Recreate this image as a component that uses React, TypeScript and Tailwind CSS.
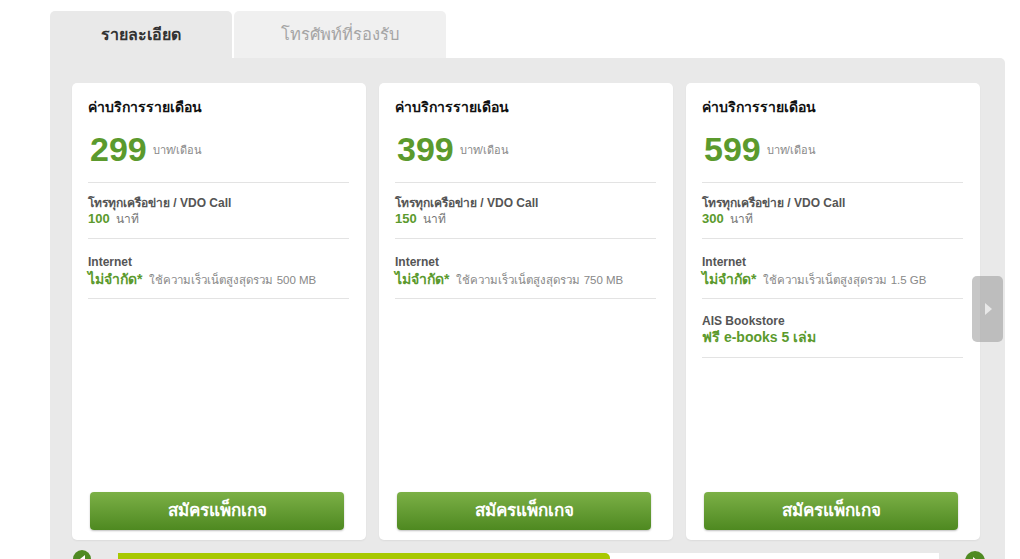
import React from "react";

type Plan = {
  price: string;
  minutes: string;
  data: string;
  extra?: boolean;
};

const plans: Plan[] = [
  { price: "299", minutes: "100", data: "500 MB" },
  { price: "399", minutes: "150", data: "750 MB" },
  { price: "599", minutes: "300", data: "1.5 GB", extra: true },
];

function Card({ p }: { p: Plan }) {
  return (
    <div className="w-[294px] h-[457px] bg-white rounded-[5px] shadow-[0_1px_2px_rgba(0,0,0,0.06)] flex flex-col">
      <div className="px-4 pr-[17px] pt-[14px]">
        <div className="text-[14px] leading-[20px] font-bold text-[#111]">ค่าบริการรายเดือน</div>
        <div className="flex items-center h-[40px] mt-[12px] mb-[13px] pl-[2px]">
          <span className="text-[34px] leading-[40px] font-bold text-[#5b9a2d]">{p.price}</span>
          <span className="text-[11px] text-[#888] ml-[6px] mt-[3px]">บาท/เดือน</span>
        </div>
        <div className="border-t border-[#e3e3e3] pt-3 pb-[11px]">
          <div className="text-[12px] leading-[16px] font-bold text-[#555]">โทรทุกเครือข่าย / VDO Call</div>
          <div className="text-[12px] leading-[16px] text-[#777]">
            <span className="text-[13px] font-bold text-[#5b9a2d]">{p.minutes}</span>
            <span className="ml-[6px]">นาที</span>
          </div>
        </div>
        <div className="border-t border-[#e3e3e3] pt-[15px] pb-[9px]">
          <div className="text-[12px] leading-[16px] font-bold text-[#555]">Internet</div>
          <div className="text-[11.5px] leading-[18px] text-[#888]">
            <span className="text-[14px] font-bold text-[#5b9a2d]">ไม่จำกัด*</span>
            <span className="ml-[7px]">ใช้ความเร็วเน็ตสูงสุดรวม {p.data}</span>
          </div>
        </div>
        {p.extra && (
          <div className="border-t border-[#e3e3e3] pt-[14px] pb-[12px]">
            <div className="text-[12px] leading-[16px] font-bold text-[#555]">AIS Bookstore</div>
            <div className="text-[14px] leading-[16px] font-bold text-[#5b9a2d]">ฟรี e-books 5 เล่ม</div>
          </div>
        )}
        <div className="border-t border-[#e3e3e3]" />
      </div>
      <div className="mt-auto mb-[10px] ml-[18px] w-[254px] h-[38px] rounded-[4px] bg-gradient-to-b from-[#7cb046] to-[#4e8920] shadow-[0_1px_2px_rgba(0,0,0,0.25)] flex items-center justify-center text-white text-[17px] font-bold">
        สมัครแพ็กเกจ
      </div>
    </div>
  );
}

export default function App() {
  return (
    <div
      className="w-[1020px] h-[559px] bg-white overflow-hidden"
      style={{ fontFamily: '"Liberation Sans", Tahoma, "DejaVu Sans", sans-serif' }}
    >
      <div className="ml-[50px] w-[955px] pt-[11px]">
        <div className="flex gap-[2px]">
          <div className="w-[182px] h-[47px] bg-[#e9e9e9] rounded-t-[5px] flex items-center justify-center text-[16px] font-bold text-[#333]">
            รายละเอียด
          </div>
          <div className="w-[212px] h-[47px] bg-[#f0f0f0] rounded-t-[5px] flex items-center justify-center text-[16.5px] text-[#a5a5a5]">
            โทรศัพท์ที่รองรับ
          </div>
        </div>
        <div className="relative bg-[#e9e9e9] rounded-tr-[5px] h-[520px] pt-[25px] pl-[22px]">
          <div className="flex gap-[13px]">
            {plans.map((p) => (
              <Card key={p.price} p={p} />
            ))}
          </div>
          <div className="flex items-start mt-[13px]">
            <div className="ml-[1px] w-[18px] h-[18px] rounded-full bg-[#4f8a22] -mt-[3px] flex items-center justify-center">
              <div className="w-0 h-0 border-y-[4px] border-y-transparent border-r-[5px] border-r-white" />
            </div>
            <div className="ml-[27px] w-[821px] h-[10px] bg-white flex">
              <div className="w-[492px] h-full bg-[#a8c800] rounded-r-[5px]" />
            </div>
            <div className="ml-[26px] w-[20px] h-[20px] rounded-full bg-[#4f8a22] -mt-[2px] flex items-center justify-center">
              <div className="w-0 h-0 border-y-[4px] border-y-transparent border-l-[5px] border-l-white ml-[1px]" />
            </div>
          </div>
          <div className="absolute left-[922px] top-[218px] w-[31px] h-[66px] rounded-[5px] bg-[rgba(160,160,160,0.6)] flex items-center justify-center">
            <div className="w-0 h-0 border-y-[6px] border-y-transparent border-l-[7px] border-l-[#e8e8e8] ml-[1px]" />
          </div>
        </div>
      </div>
    </div>
  );
}
